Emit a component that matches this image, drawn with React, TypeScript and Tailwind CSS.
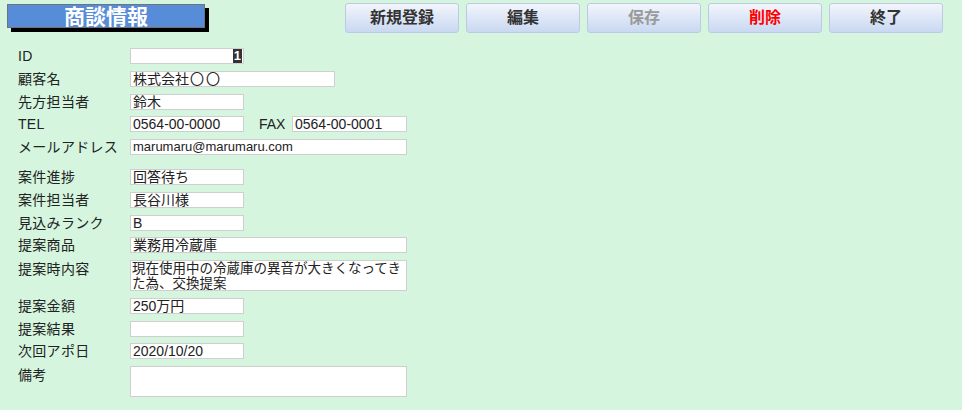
import React from "react";

const FONT = '"Liberation Sans", "Noto Sans CJK JP", sans-serif';

function Field({ w, h = 16, size = 14, children, className = "" }: { w: number; h?: number; size?: number; children?: React.ReactNode; className?: string }) {
  return (
    <div
      className={"bg-white border border-[#cfcfcf] leading-[14px] text-[#222] pl-[2px] flex items-center overflow-hidden whitespace-nowrap " + className}
      style={{ width: w, height: h, fontSize: size }}
    >
      {children}
    </div>
  );
}

function Label({ children, top = false }: { children: React.ReactNode; top?: boolean }) {
  return (
    <div className={"w-[112px] text-[14px] leading-[16px] text-[#222] tracking-[0.3px] whitespace-nowrap " + (top ? "self-start pt-[1px]" : "")}>
      {children}
    </div>
  );
}

function Row({ children, h = 16, className = "" }: { children: React.ReactNode; h?: number; className?: string }) {
  return (
    <div className={"flex items-center " + className} style={{ height: h }}>
      {children}
    </div>
  );
}

function Btn({ children, color = "text-[#333]" }: { children: React.ReactNode; color?: string }) {
  return (
    <div
      className={
        "w-[114px] h-[30px] rounded-[3px] border border-[#bccbe3] bg-gradient-to-b from-[#f2f5fc] to-[#c9d8f1] flex items-center justify-center text-[16px] leading-none font-bold " +
        color
      }
    >
      {children}
    </div>
  );
}

export default function App() {
  return (
    <div className="w-[962px] h-[410px] bg-[#d5f5de] overflow-hidden" style={{ fontFamily: FONT }}>
      <div className="flex items-start pt-[3px] h-[33px]">
        <div className="ml-[7px] mt-[1px] w-[198px] h-[24px] bg-[#568cd8] border border-[#6f747a] shadow-[4px_4px_0_#000] flex items-center justify-center text-white text-[21px] font-bold leading-none">
          商談情報
        </div>
        <div className="ml-[140px] flex gap-[7px]">
          <Btn>新規登録</Btn>
          <Btn>編集</Btn>
          <Btn color="text-[#9a9a9a]">保存</Btn>
          <Btn color="text-[#f00]">削除</Btn>
          <Btn>終了</Btn>
        </div>
      </div>

      <div className="pl-[18px] pt-[15px] flex flex-col gap-[6.75px]">
        <Row>
          <Label>ID</Label>
          <Field w={114} className="justify-end pr-[1px]">
            <span className="bg-[#333] text-white text-[13px] leading-[14px] px-[1px] font-bold">1</span>
          </Field>
        </Row>
        <Row>
          <Label>顧客名</Label>
          <Field w={205}>
            株式会社<span className="tracking-[2px] pl-[1px]">〇〇</span>
          </Field>
        </Row>
        <Row>
          <Label>先方担当者</Label>
          <Field w={114}>鈴木</Field>
        </Row>
        <Row>
          <Label>TEL</Label>
          <Field w={114}>0564-00-0000</Field>
          <div className="w-[48px] pl-[15px] text-[14px] leading-[16px] text-[#222]">FAX</div>
          <Field w={115}>0564-00-0001</Field>
        </Row>
        <Row>
          <Label>メールアドレス</Label>
          <Field w={277} size={13}>marumaru@marumaru.com</Field>
        </Row>

        <Row className="mt-[7.25px]">
          <Label>案件進捗</Label>
          <Field w={114}>回答待ち</Field>
        </Row>
        <Row>
          <Label>案件担当者</Label>
          <Field w={114}>長谷川様</Field>
        </Row>
        <Row>
          <Label>見込みランク</Label>
          <Field w={114}>B</Field>
        </Row>
        <Row>
          <Label>提案商品</Label>
          <Field w={277}>業務用冷蔵庫</Field>
        </Row>
        <Row h={31}>
          <Label top>提案時内容</Label>
          <div className="w-[277px] h-[31px] bg-white border border-[#cfcfcf] text-[13.5px] leading-[15px] text-[#222] pl-[1px] whitespace-nowrap">
            現在使用中の冷蔵庫の異音が大きくなってき
            <br />
            た為、交換提案
          </div>
        </Row>
        <Row>
          <Label>提案金額</Label>
          <Field w={114}>250万円</Field>
        </Row>
        <Row>
          <Label>提案結果</Label>
          <Field w={114} />
        </Row>
        <Row>
          <Label>次回アポ日</Label>
          <Field w={114}>2020/10/20</Field>
        </Row>
        <Row h={31}>
          <Label top>備考</Label>
          <div className="w-[277px] h-[31px] bg-white border border-[#cfcfcf]" />
        </Row>
      </div>
    </div>
  );
}
